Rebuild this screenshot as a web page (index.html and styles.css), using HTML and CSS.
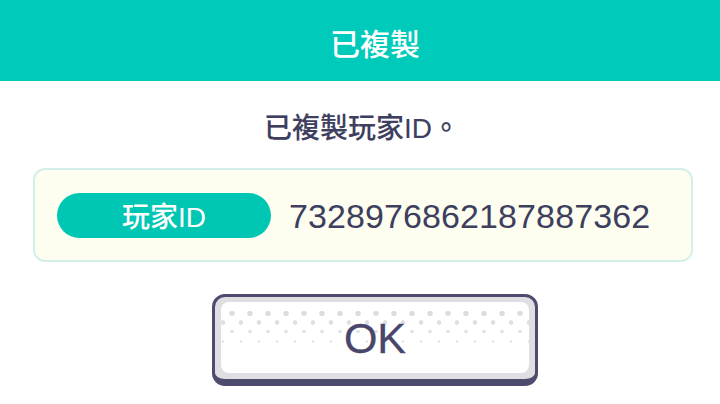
FILE: index.html
```html
<!DOCTYPE html>
<html>
<head>
<meta charset="UTF-8">
<title>已複製</title>
<link rel="stylesheet" href="styles.css">
</head>
<body>

<div class="header">已複製</div>

<div class="msg">已複製玩家ID。</div>

<div class="idbox">
  <div class="pill">玩家ID</div>
  <div class="idnum">7328976862187887362</div>
</div>

<div class="btnrow">
  <button class="okbtn"><span class="inner"><span class="label">OK</span></span></button>
</div>

</body>
</html>
```

FILE: styles.css
```css
body { margin:0; width:720px; height:404px; background:#fff; overflow:hidden;
  font-family:"Liberation Sans","Noto Sans CJK TC",sans-serif; color:#3e3e5e; }

.header { height:81px; background:#00cbba; color:#fff; font-size:30px; font-weight:500;
  display:flex; align-items:center; justify-content:center; padding:3px 0 0 30px; box-sizing:border-box; }

.msg { text-align:center; font-size:28px; font-weight:500; margin-top:30px; height:36px; line-height:36px;
  padding-left:4px; -webkit-text-stroke:0.1px #3e3e5e; }

.idbox { margin:21px 0 0 33px; width:660px; height:94px; box-sizing:border-box;
  background:#fdfeef; border:2px solid #d3efe9; border-radius:12px;
  display:flex; align-items:center; }
.pill { margin-left:22px; width:214px; height:45px; border-radius:23px; background:#00c6b4;
  color:#fff; font-size:28px; font-weight:500; display:flex; align-items:center; justify-content:center; }
.idnum { margin-left:18px; font-size:34px; letter-spacing:0.1px; padding-top:2px; }

.btnrow { margin:32px 0 0 212px; }
.okbtn { display:block; width:326px; height:92px; padding:0; box-sizing:border-box;
  border:3px solid #4d4b6e; border-bottom-width:7px; border-radius:13px; background:#dfdfe3; font:inherit; }
.inner { display:flex; position:relative; margin:5px 6px 6px; height:calc(100% - 11px); border-radius:8px;
  background:#fff; align-items:center; justify-content:center; overflow:hidden; }
.inner::before { content:""; position:absolute; left:0; right:0; top:0; height:46px;
  background-image:
    radial-gradient(circle, #dcdce2 2.4px, transparent 3px),
    radial-gradient(circle, #dfdfe4 2px, transparent 2.6px),
    radial-gradient(circle, #e3e3e7 1.5px, transparent 2.1px),
    radial-gradient(circle, #e8e8eb 1px, transparent 1.6px);
  background-size:18px 9px;
  background-repeat:repeat-x;
  background-position:2px 7px, 11px 16px, 2px 25px, 11px 35px; }
.label { position:relative; font-size:43px; color:#48466a; padding-top:2px; -webkit-text-stroke:0.3px #48466a; }
```
